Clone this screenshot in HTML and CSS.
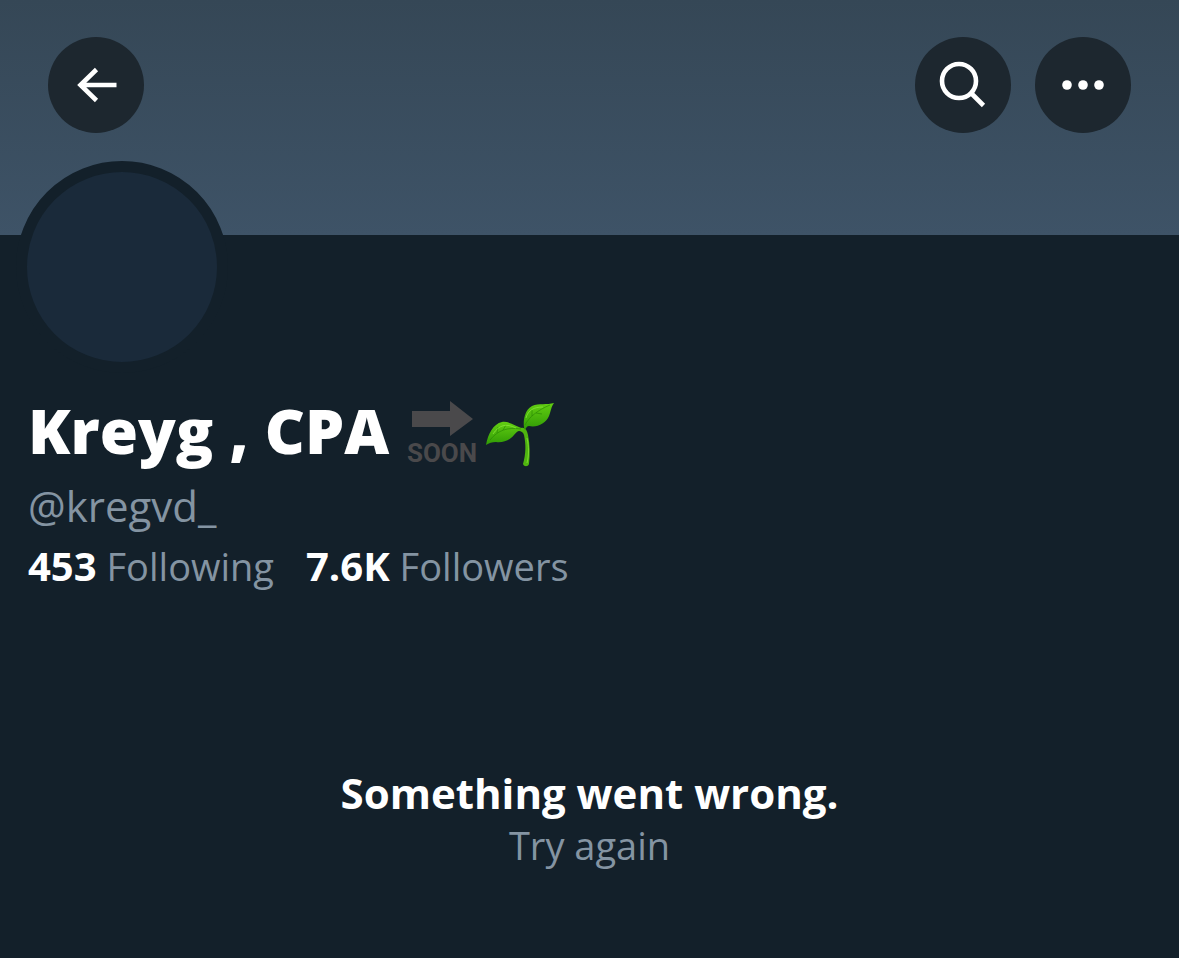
FILE: index.html
```html
<!DOCTYPE html>
<html lang="en">
<head>
  <meta charset="UTF-8">
  <meta name="viewport" content="width=device-width, initial-scale=1.0">
  <title>Kreyg , CPA (@kregvd_)</title>
  <link rel="stylesheet" href="styles.css">
</head>
<body>
  <header class="banner">
    <button class="round-btn" type="button" aria-label="Back">
      <svg width="96" height="96" viewBox="0 0 96 96" fill="none" stroke="#fff" stroke-width="4.6">
        <path d="M68.500 48H33M48.500 32.500L32.500 48l16 15.500"/>
      </svg>
    </button>
    <div class="banner-actions">
      <button class="round-btn" type="button" aria-label="Search">
        <svg width="96" height="96" viewBox="0 0 96 96" fill="none" stroke="#fff" stroke-width="4.6">
          <circle cx="44" cy="44" r="17"/>
          <path d="M56 56l12.500 12.500"/>
        </svg>
      </button>
      <button class="round-btn" type="button" aria-label="More">
        <svg width="96" height="96" viewBox="0 0 96 96" fill="#fff">
          <circle cx="32" cy="48" r="4.800"/>
          <circle cx="48" cy="48" r="4.800"/>
          <circle cx="64" cy="48" r="4.800"/>
        </svg>
      </button>
    </div>
  </header>

  <main>
    <section class="profile">
      <div class="avatar"></div>
      <h1 class="name">
        <span>Kreyg , CPA</span>
        <span class="emojis">
          <svg width="70" height="68" viewBox="0 0 70 68" role="img" aria-label="Soon">
            <path fill="#4a494b" d="M5 10h38V0l23 18-23 17V26H5z"/>
            <text class="soon" x="35" y="61" text-anchor="middle">SOON</text>
          </svg>
          <svg width="70" height="68" viewBox="0 0 70 68" role="img" aria-label="Seedling">
            <defs>
              <linearGradient id="leaf" x1="0" y1="0" x2="0" y2="1">
                <stop offset="0" stop-color="#63cf12"/>
                <stop offset="1" stop-color="#2f9a05"/>
              </linearGradient>
            </defs>
            <path fill="#4fb40f" d="M36 27c4-1 6 2 7 7 2 10 2 19 1 29-1 3-5 3-6 0 3-10 3-20 1-29-1-3-3-4-5-4z"/>
            <path fill="url(#leaf)" d="M1 44C3 33 8 23 17 21c7-1 13 4 22 7l-1 2c-4-1-6 0-9 4-4 5-11 8-18 7-4 0-7 1-10 3z"/>
            <path fill="url(#leaf)" d="M39 27c-1-9 1-18 8-22 7-3 15-1 22-3-3 4-3 8-5 13-3 7-12 12-20 10-2 0-3 2-4 4z"/>
            <path fill="none" stroke="#278604" stroke-opacity=".6" d="M5 39c8-10 18-13 31-11M12 32l1-6M18 29l3-5M40 24C44 16 53 9 65 4M47 15V9M51 12l6 1"/>
            <path fill="none" stroke="#8ce83c" stroke-opacity=".7" d="M8 33c6-9 13-11 23-6M41 17c2-8 8-11 17-11M42 37c2 9 2 17 0 25"/>
          </svg>
        </span>
      </h1>
      <p class="handle">@kregvd_</p>
      <nav class="stats">
        <a href="#following"><strong>453</strong> Following</a>
        <a href="#followers"><strong>7.6K</strong> Followers</a>
      </nav>
    </section>

    <section class="error">
      <h2 class="error-title">Something went wrong.</h2>
      <button class="retry-btn" type="button">Try again</button>
    </section>
  </main>
</body>
</html>
```
FILE: styles.css
```css
* {
  box-sizing: border-box;
}
body {
  margin: 0;
  background-color: #13202a;
  font-family: "Open Sans", "Noto Sans", sans-serif;
  color: #fff;
}
h1, h2, p {
  margin: 0;
}
button {
  border: 0;
  padding: 0;
  font-family: inherit;
  cursor: pointer;
}

.banner {
  display: flex;
  justify-content: space-between;
  height: 235px;
  padding: 37px 48px;
  background: linear-gradient(#354756, #3e5367);
}
.banner-actions {
  display: flex;
  gap: 24px;
}
.round-btn {
  width: 96px;
  height: 96px;
  border-radius: 50%;
  background-color: #1d272f;
}
.round-btn svg {
  display: block;
}

.profile {
  padding: 0 28px;
}
/* ring around the avatar cuts into the banner */
.avatar {
  width: 212px;
  height: 212px;
  margin: -74px 0 17px -12px;
  border: 11px solid #13202a;
  border-radius: 50%;
  background-color: #1a2a3a;
}
.name {
  display: flex;
  align-items: center;
  gap: 18px;
  font-size: 62px;
  line-height: 80px;
  font-weight: 800;
}
.emojis {
  display: flex;
  gap: 8px;
  padding-top: 10px;
}
.soon {
  fill: #4a494b;
  font-family: Roboto, sans-serif;
  font-size: 26px;
  font-weight: 700;
}
.handle {
  margin: 6px 0 2px;
  color: #8494a2;
  font-size: 42px;
  line-height: 60px;
}
.stats {
  display: flex;
  gap: 32px;
  font-size: 38px;
  line-height: 56px;
}
.stats a {
  color: #8494a2;
  text-decoration: none;
}
.stats strong {
  color: #fff;
  font-size: 40px;
}

.error {
  display: flex;
  flex-direction: column;
  align-items: center;
  padding: 171px 28px 48px;
}
.error-title {
  font-size: 42px;
  line-height: 56px;
  font-weight: 700;
}
.retry-btn {
  background: none;
  color: #8494a2;
  font-size: 38px;
  line-height: 48px;
}
```
